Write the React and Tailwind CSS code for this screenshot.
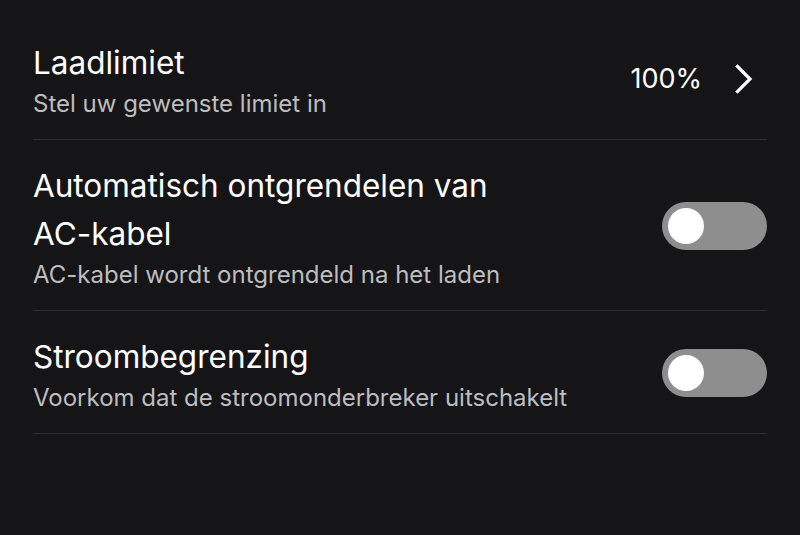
import { useState } from "react";

function Toggle({ on, onChange }) {
    return (
        <button
            type="button"
            onClick={() => onChange(!on)}
            className={`relative w-[105px] h-[48px] rounded-full shrink-0 transition-colors ${on ? "bg-[#3478f6]" : "bg-[#8e8e8e]"}`}
        >
            <span
                className={`absolute top-[6px] w-[36px] h-[36px] rounded-full bg-white transition-all ${on ? "left-[63px]" : "left-[6px]"}`}
            />
        </button>
    );
}

function Row({ title, subtitle, children }) {
    return (
        <div className="flex items-center justify-between gap-6 border-b border-[#2e2e30] pt-[22px] pb-[20px]">
            <div className="flex flex-col min-w-0">
                <p className="text-[31.5px] leading-[48px] text-white max-w-[500px]">{title}</p>
                <p className="text-[24px] leading-[30px] mt-[2px] text-[#bdbdbf]">{subtitle}</p>
            </div>
            {children}
        </div>
    );
}

function App() {
    const [unlock, setUnlock] = useState(false);
    const [limit, setLimit] = useState(false);

    return (
        <div
            className="min-h-screen bg-[#151518] px-[33px] pt-[17px]"
            style={{ fontFamily: "Inter, 'Noto Sans', sans-serif" }}
        >
            <Row title="Laadlimiet" subtitle="Stel uw gewenste limiet in">
                <div className="flex items-center gap-[33px] pr-[14px]">
                    <span className="text-[27px] text-white">100%</span>
                    <svg width="18" height="30" viewBox="0 0 18 30" fill="none">
                        <path d="M2.5 2.5 L15 15 L2.5 27.5" stroke="white" strokeWidth="3.2" strokeLinecap="square" strokeLinejoin="miter" />
                    </svg>
                </div>
            </Row>

            <Row title="Automatisch ontgrendelen van AC-kabel" subtitle="AC-kabel wordt ontgrendeld na het laden">
                <Toggle on={unlock} onChange={setUnlock} />
            </Row>

            <Row title="Stroombegrenzing" subtitle="Voorkom dat de stroomonderbreker uitschakelt">
                <Toggle on={limit} onChange={setLimit} />
            </Row>
        </div>
    );
}

export default App;
